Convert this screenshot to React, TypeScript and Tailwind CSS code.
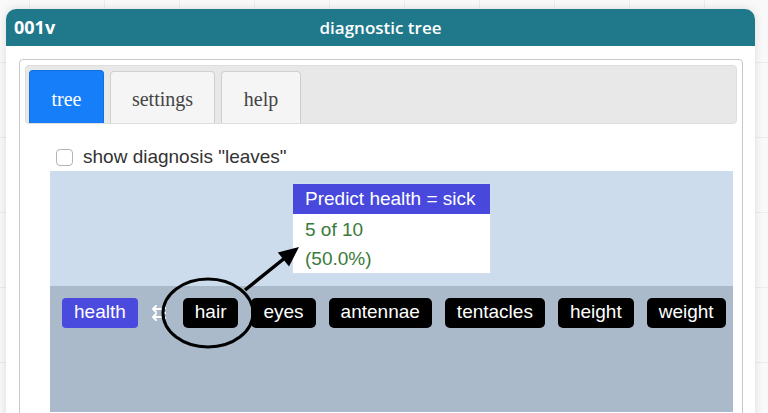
const attrs = ["hair", "eyes", "antennae", "tentacles", "height", "weight"];
const tabs = [
  { label: "tree", width: "w-[75px]", active: true },
  { label: "settings", width: "w-[105px]", active: false },
  { label: "help", width: "w-[80px]", active: false },
];

function SwapIcon() {
  return (
    <svg width="18" height="18" viewBox="0 0 18 18" className="shrink-0">
      <g stroke="#fff" strokeWidth="2" fill="none" strokeLinecap="round" strokeLinejoin="round">
        <path d="M11 5H3M6 2L3 5l3 3" />
        <path d="M11 13H3M6 10l-3 3 3 3" />
      </g>
      <g fill="#fff">
        <rect x="14" y="3" width="2" height="2" />
        <rect x="14" y="8" width="2" height="2" />
        <rect x="14" y="13" width="2" height="2" />
      </g>
    </svg>
  );
}

export default function App() {
  return (
    <div className="relative h-[413px] w-[768px] overflow-hidden bg-[#f9f9f9] bg-[linear-gradient(#ececec_1px,transparent_1px),linear-gradient(90deg,#ececec_1px,transparent_1px)] bg-[size:75px_75px] bg-[position:29px_62px] pl-[6px] pt-[9px] font-['Liberation_Sans',Arial,sans-serif]">
      <div className="flex h-[420px] w-[749px] flex-col rounded-t-[10px] bg-white shadow-[0_0_10px_rgba(0,0,0,0.12)]">
        {/* title bar */}
        <div className="relative flex h-[37px] items-center justify-center rounded-t-[10px] bg-[#1f798b] font-['Open_Sans',sans-serif] text-[17px] font-semibold text-white">
          <span className="absolute left-[8px] text-[18px] font-bold">001v</span>
          <span>diagnostic tree</span>
        </div>

        <div className="flex-1 px-[12px] pl-[13px] pt-[13px]">
          <div className="h-full rounded-[4px] border border-[#c8c8c8] p-[5px]">
            {/* tab bar */}
            <div className="flex h-[59px] items-end gap-[6px] rounded-[4px] border border-[#dedede] bg-[#e8e8e8] px-[3px]">
              {tabs.map((t) => (
                <div
                  key={t.label}
                  className={
                    t.active
                      ? `flex h-[53px] ${t.width} items-center justify-center rounded-t-[4px] border border-b-0 border-[#0f6fe6] bg-[#177ef9] pt-[3px] font-['Liberation_Serif',Georgia,serif] text-[20px] text-white`
                      : `flex h-[52px] ${t.width} items-center justify-center rounded-t-[4px] border border-b-0 border-[#cfcfcf] bg-[#f5f5f5] pt-[3px] font-['Liberation_Serif',Georgia,serif] text-[20px] text-[#444]`
                  }
                >
                  {t.label}
                </div>
              ))}
            </div>

            {/* content */}
            <div className="pl-[25px] pr-[4px] pt-[20px]">
              <div className="flex h-[26px] items-center gap-[10px] pl-[6px]">
                <span className="h-[17px] w-[17px] rounded-[4px] border border-[#b5b5b5] bg-white" />
                <span className="text-[19px] text-[#333]">show diagnosis "leaves"</span>
              </div>

              <div className="mt-[1px] flex justify-center bg-[#cddcec] py-[12px]">
                <div className="w-[199px] border border-[#d4dcf0] bg-white text-[19px]">
                  <div className="flex h-[30px] items-center bg-[#4848dd] px-[12px] text-white">
                    Predict health = sick
                  </div>
                  <div className="flex h-[30px] items-center px-[12px] pt-[3px] text-[#3b7a3b]">5 of 10</div>
                  <div className="flex h-[29px] items-center px-[12px] pt-[2px] text-[#3b7a3b]">(50.0%)</div>
                </div>
              </div>

              <div className="flex h-[126px] items-start bg-[#aabaca] p-[12px] text-[19px] text-white">
                <div className="flex h-[30px] items-center rounded-[4px] bg-[#4a4ade] px-[12px] pb-[3px] leading-none">
                  health
                </div>
                <div className="ml-[12px] mr-[15px] mt-[6px]">
                  <SwapIcon />
                </div>
                <div className="flex gap-[13px]">
                  {attrs.map((a) => (
                    <div
                      key={a}
                      className="flex h-[30px] items-center rounded-[5px] bg-black px-[12px] pb-[3px] leading-none"
                    >
                      {a}
                    </div>
                  ))}
                </div>
              </div>
            </div>
          </div>
        </div>
      </div>

      {/* annotation overlay */}
      <svg className="pointer-events-none absolute inset-0" width="768" height="413" viewBox="0 0 768 413">
        <ellipse cx="208" cy="313" rx="45" ry="34" fill="none" stroke="#000" strokeWidth="3" />
        <line x1="245" y1="290" x2="286" y2="257" stroke="#000" strokeWidth="3.5" />
        <polygon points="299,247 289,266.4 277.8,252.4" fill="#000" />
      </svg>
    </div>
  );
}
